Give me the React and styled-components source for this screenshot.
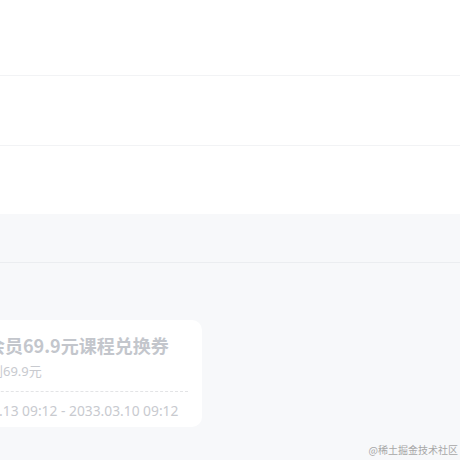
import React from 'react';
import styled, { createGlobalStyle } from 'styled-components';

const GlobalStyle = createGlobalStyle`
  html, body {
    margin: 0;
    padding: 0;
    background: #f7f8fa;
    font-family: 'Noto Sans', 'Noto Sans CJK SC', sans-serif;
  }
`;

const Page = styled.div`
  position: relative;
  width: 460px;
  height: 460px;
  overflow: hidden;
  background: #f7f8fa;
`;

const Cell = styled.div`
  height: ${p => p.h}px;
  background: #fff;
  border-bottom: ${p => (p.last ? 'none' : '1px solid #f2f3f5')};
`;

const TabBar = styled.div`
  height: 48px;
  border-bottom: 1px solid #ebedf0;
`;

const List = styled.div`
  padding-top: 57px;
`;

const Coupon = styled.div`
  width: 265px;
  margin-left: -63px;
  height: 107px;
  box-sizing: border-box;
  background: #fff;
  border-radius: 10px;
  padding: 10px 14px 0 14px;
  display: flex;
  flex-direction: column;
`;

const Title = styled.div`
  font-family: 'Noto Sans CJK SC', sans-serif;
  font-size: 18px;
  font-weight: 700;
  line-height: 30px;
  color: #c3c6cc;
  white-space: nowrap;
`;

const Desc = styled.div`
  font-size: 13px;
  line-height: 20px;
  margin-top: 1px;
  color: #c8cacf;
  white-space: nowrap;
`;

const Divider = styled.div`
  margin-top: 10px;
  border-top: 1px dashed #e3e4e6;
`;

const Period = styled.div`
  font-size: 13.8px;
  line-height: 20px;
  margin: 9px 0 0 -3px;
  color: #c8cacf;
  white-space: nowrap;
`;

const Watermark = styled.div`
  position: absolute;
  right: 2px;
  bottom: 3px;
  font-family: 'Noto Sans CJK SC', serif;
  font-size: 10px;
  color: #a7a7a7;
`;

export default function App() {
  return (
    <>
      <GlobalStyle />
      <Page>
        <Cell h={75} />
        <Cell h={69} />
        <Cell h={68} last />
        <TabBar />
        <List>
          <Coupon>
            <Title>掘金会员69.9元课程兑换券</Title>
            <Desc>最低降到69.9元</Desc>
            <Divider />
            <Period>2023.03.13 09:12 - 2033.03.10 09:12</Period>
          </Coupon>
        </List>
        <Watermark>@稀土掘金技术社区</Watermark>
      </Page>
    </>
  );
}
